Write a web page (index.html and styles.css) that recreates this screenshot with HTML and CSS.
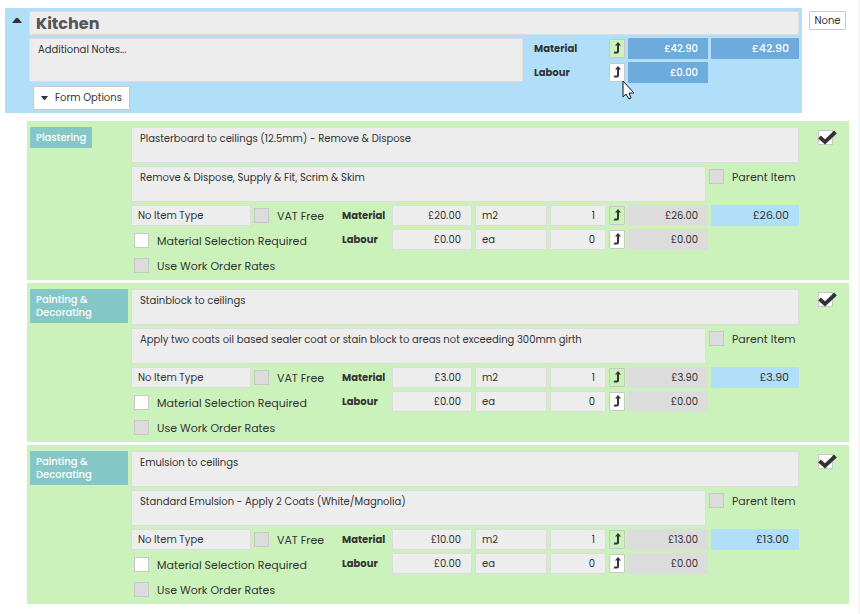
FILE: index.html
```html
<!DOCTYPE html>
<html lang="en">
<head>
    <meta charset="UTF-8">
    <meta name="viewport" content="width=device-width, initial-scale=1.0">
    <title>Kitchen</title>
    <link rel="stylesheet" href="styles.css">
</head>
<body>
    <svg class="sprite" width="0" height="0" aria-hidden="true">
        <symbol id="up" viewBox="0 0 8 12">
            <path d="M5 0L8 3.5H6V9.5Q6 11.5 4 11.5H0.5L1.5 9.5H4V3.5H2Z"/>
        </symbol>
        <symbol id="tick" viewBox="0 0 19 15">
            <path d="M1.5 7L7 12L17.5 2" fill="none" stroke="#333" stroke-width="3.8"/>
        </symbol>
    </svg>

    <div class="top">
        <section class="room">
            <button class="collapse" aria-label="Collapse"><svg width="10" height="5" viewBox="0 0 10 5"><path d="M0 5L4 0H6L10 5Z"/></svg></button>
            <div class="room-body">
                <input class="box room-title" type="text" value="Kitchen" aria-label="Room name">
                <div class="room-row">
                    <textarea class="box notes" aria-label="Additional notes">Additional Notes...</textarea>
                    <div class="totals">
                        <b class="total-label">Material</b>
                        <button class="arrow on" aria-label="Mark up material"><svg width="8" height="12"><use href="#up"/></svg></button>
                        <output class="blue">£42.90</output>
                        <output class="blue large">£42.90</output>
                        <b class="total-label">Labour</b>
                        <div class="pointed">
                            <button class="arrow" aria-label="Mark up labour"><svg width="8" height="12"><use href="#up"/></svg></button>
                            <svg class="cursor" width="13" height="20" viewBox="0 0 13 20"><path d="M1 1V17L4 14L7 19L9 18L7 13H12Z" fill="#fff" stroke="#111"/></svg>
                        </div>
                        <output class="blue">£0.00</output>
                    </div>
                </div>
                <button class="form-options"><svg width="7" height="4" viewBox="0 0 7 4"><path d="M0 0H7L4 4H3Z"/></svg>Form Options</button>
            </div>
        </section>
        <button class="none">None</button>
    </div>

    <main class="items">
        <article class="item">
            <div><span class="tag">Plastering</span></div>
            <div class="form">
                <textarea class="box text" aria-label="Title">Plasterboard to ceilings (12.5mm) - Remove &amp; Dispose</textarea>
                <div class="desc-row">
                    <textarea class="box text" aria-label="Description">Remove &amp; Dispose, Supply &amp; Fit, Scrim &amp; Skim</textarea>
                    <label class="check parent"><input type="checkbox" class="grey">Parent Item</label>
                </div>
                <div class="details">
                    <div class="options">
                        <div class="type-row">
                            <select class="box type" aria-label="Item type"><option>No Item Type</option></select>
                            <label class="check"><input type="checkbox" class="grey">VAT Free</label>
                        </div>
                        <label class="check indent"><input type="checkbox">Material Selection Required</label>
                        <label class="check indent"><input type="checkbox" class="grey">Use Work Order Rates</label>
                    </div>
                    <div class="figures">
                        <b>Material</b>
                        <input class="box num" type="text" value="£20.00" aria-label="Material price">
                        <input class="box" type="text" value="m2" aria-label="Material unit">
                        <input class="box num" type="text" value="1" aria-label="Material quantity">
                        <button class="arrow on" aria-label="Mark up material"><svg width="8" height="12"><use href="#up"/></svg></button>
                        <output class="sum">£26.00</output>
                        <output class="sum large">£26.00</output>
                        <b>Labour</b>
                        <input class="box num" type="text" value="£0.00" aria-label="Labour price">
                        <input class="box" type="text" value="ea" aria-label="Labour unit">
                        <input class="box num" type="text" value="0" aria-label="Labour quantity">
                        <button class="arrow" aria-label="Mark up labour"><svg width="8" height="12"><use href="#up"/></svg></button>
                        <output class="sum">£0.00</output>
                    </div>
                </div>
            </div>
            <label class="done"><input type="checkbox" checked aria-label="Include item"><svg class="tick" width="19" height="15"><use href="#tick"/></svg></label>
        </article>

        <article class="item">
            <div><span class="tag">Painting &amp; Decorating</span></div>
            <div class="form">
                <textarea class="box text" aria-label="Title">Stainblock to ceilings</textarea>
                <div class="desc-row">
                    <textarea class="box text" aria-label="Description">Apply two coats oil based sealer coat or stain block to areas not exceeding 300mm girth</textarea>
                    <label class="check parent"><input type="checkbox" class="grey">Parent Item</label>
                </div>
                <div class="details">
                    <div class="options">
                        <div class="type-row">
                            <select class="box type" aria-label="Item type"><option>No Item Type</option></select>
                            <label class="check"><input type="checkbox" class="grey">VAT Free</label>
                        </div>
                        <label class="check indent"><input type="checkbox">Material Selection Required</label>
                        <label class="check indent"><input type="checkbox" class="grey">Use Work Order Rates</label>
                    </div>
                    <div class="figures">
                        <b>Material</b>
                        <input class="box num" type="text" value="£3.00" aria-label="Material price">
                        <input class="box" type="text" value="m2" aria-label="Material unit">
                        <input class="box num" type="text" value="1" aria-label="Material quantity">
                        <button class="arrow on" aria-label="Mark up material"><svg width="8" height="12"><use href="#up"/></svg></button>
                        <output class="sum">£3.90</output>
                        <output class="sum large">£3.90</output>
                        <b>Labour</b>
                        <input class="box num" type="text" value="£0.00" aria-label="Labour price">
                        <input class="box" type="text" value="ea" aria-label="Labour unit">
                        <input class="box num" type="text" value="0" aria-label="Labour quantity">
                        <button class="arrow" aria-label="Mark up labour"><svg width="8" height="12"><use href="#up"/></svg></button>
                        <output class="sum">£0.00</output>
                    </div>
                </div>
            </div>
            <label class="done"><input type="checkbox" checked aria-label="Include item"><svg class="tick" width="19" height="15"><use href="#tick"/></svg></label>
        </article>

        <article class="item">
            <div><span class="tag">Painting &amp; Decorating</span></div>
            <div class="form">
                <textarea class="box text" aria-label="Title">Emulsion to ceilings</textarea>
                <div class="desc-row">
                    <textarea class="box text" aria-label="Description">Standard Emulsion - Apply 2 Coats (White/Magnolia)</textarea>
                    <label class="check parent"><input type="checkbox" class="grey">Parent Item</label>
                </div>
                <div class="details">
                    <div class="options">
                        <div class="type-row">
                            <select class="box type" aria-label="Item type"><option>No Item Type</option></select>
                            <label class="check"><input type="checkbox" class="grey">VAT Free</label>
                        </div>
                        <label class="check indent"><input type="checkbox">Material Selection Required</label>
                        <label class="check indent"><input type="checkbox" class="grey">Use Work Order Rates</label>
                    </div>
                    <div class="figures">
                        <b>Material</b>
                        <input class="box num" type="text" value="£10.00" aria-label="Material price">
                        <input class="box" type="text" value="m2" aria-label="Material unit">
                        <input class="box num" type="text" value="1" aria-label="Material quantity">
                        <button class="arrow on" aria-label="Mark up material"><svg width="8" height="12"><use href="#up"/></svg></button>
                        <output class="sum">£13.00</output>
                        <output class="sum large">£13.00</output>
                        <b>Labour</b>
                        <input class="box num" type="text" value="£0.00" aria-label="Labour price">
                        <input class="box" type="text" value="ea" aria-label="Labour unit">
                        <input class="box num" type="text" value="0" aria-label="Labour quantity">
                        <button class="arrow" aria-label="Mark up labour"><svg width="8" height="12"><use href="#up"/></svg></button>
                        <output class="sum">£0.00</output>
                    </div>
                </div>
            </div>
            <label class="done"><input type="checkbox" checked aria-label="Include item"><svg class="tick" width="19" height="15"><use href="#tick"/></svg></label>
        </article>
    </main>
</body>
</html>
```
FILE: styles.css
```css
* {
    box-sizing: border-box;
}
html {
    background: #fff;
}
body {
    margin: 0;
    padding: 8px 9px 10px 5px;
    min-height: 100vh;
    border-right: 2px solid #f4f4f4;
    font-family: Poppins, Inter, sans-serif;
    font-size: 10px;
    color: #333;
}
button, input, select, textarea {
    margin: 0;
    font: inherit;
    color: inherit;
}
button {
    padding: 0;
    cursor: pointer;
}
svg {
    display: block;
    fill: #333;
}
.sprite {
    position: absolute;
}
.box {
    display: block;
    width: 100%;
    min-width: 0;
    height: 21px;
    padding: 0 6px;
    border: 1px solid #dcdcdc;
    border-radius: 1px;
    background: #ededed;
}
textarea.box {
    padding: 3px 8px;
    line-height: 16px;
    resize: none;
    overflow: hidden;
}
.num {
    padding: 0 10px;
    text-align: right;
}

/* room header */
.top {
    display: flex;
    align-items: flex-start;
    gap: 7px;
}
.room {
    flex: 1;
    display: flex;
    padding: 3px;
    border-radius: 1px;
    background: #b1def8;
}
.collapse {
    width: 21px;
    height: 16px;
    padding: 2px 0 0 4px;
    border: 0;
    background: none;
}
.room-body {
    flex: 1;
}
.room-title.box {
    height: 24px;
    font-size: 16px;
    font-weight: 700;
    color: #555;
}
.room-row {
    display: flex;
    gap: 11px;
    margin: 3px 0;
}
.notes.box {
    flex: 1;
    height: 44px;
}
.totals {
    display: grid;
    grid-template-columns: 72px 16px 80px 88px;
    grid-auto-rows: 21px;
    gap: 3px;
}
.blue, .sum {
    display: flex;
    align-items: center;
    justify-content: flex-end;
    padding-right: 10px;
    border-radius: 1px;
}
.blue {
    background: #6dabdd;
    color: #fff;
    font-weight: 500;
}
.sum {
    background: #dcdcdc;
}
.large {
    font-size: 11px;
}
.sum.large {
    background: #b1def8;
}
.total-label, .figures b {
    line-height: 21px;
    font-weight: 700;
}
.arrow {
    display: flex;
    align-items: center;
    justify-content: center;
    align-self: center;
    width: 16px;
    height: 19px;
    padding-bottom: 1px;
    border: 1px solid #c8c8c8;
    border-radius: 1px;
    background: #fff;
}
.arrow.on {
    background: #ccf2bc;
}
.pointed {
    position: relative;
    display: flex;
}
.cursor {
    position: absolute;
    left: 13px;
    top: 18px;
    pointer-events: none;
}
.form-options {
    display: flex;
    align-items: center;
    gap: 7px;
    height: 24px;
    margin-left: 4px;
    padding: 0 7px;
    border: 1px solid #c8c8c8;
    border-radius: 1px;
    background: #fff;
}
.none {
    width: 37px;
    height: 19px;
    margin: 3px 3px 0 0;
    border: 1px solid #c8c8c8;
    border-radius: 1px;
    background: #fff;
}

/* work items */
.items {
    display: grid;
    gap: 3px;
    margin: 8px 0 0 22px;
}
.item {
    display: grid;
    grid-template-columns: 98px 1fr 47px;
    gap: 3px;
    padding: 6px 0 4px 3px;
    background: #ccf2bc;
}
.tag {
    display: inline-block;
    padding: 4px 6px;
    border-radius: 1px;
    background: #85c7c7;
    color: #fff;
    font-weight: 500;
    line-height: 13px;
}
.form {
    display: grid;
    gap: 3px;
}
.text.box {
    height: 36px;
}
.desc-row {
    display: flex;
    gap: 3px;
}
.desc-row .text {
    flex: 1;
}
.check {
    display: flex;
    align-items: center;
    gap: 8px;
    height: 21px;
    font-size: 11px;
    line-height: 18px;
    white-space: nowrap;
}
.parent {
    width: 90px;
}
.indent {
    padding-left: 3px;
}
input[type="checkbox"] {
    flex: none;
    appearance: none;
    width: 15px;
    height: 15px;
    border: 1px solid #c8c8c8;
    background: #fff;
}
input.grey {
    background: #dcdcdc;
}
.details {
    display: flex;
    gap: 3px;
}
.options {
    flex: 1;
    display: grid;
    gap: 4px;
}
.type-row {
    display: flex;
    gap: 3px;
}
.type.box {
    appearance: none;
    width: 120px;
}
.figures {
    display: grid;
    grid-template-columns: 47px 80px 72px 56px 16px 80px 88px;
    grid-auto-rows: 21px;
    gap: 3px;
}
.done {
    position: relative;
    align-self: start;
    padding: 3px 0 0 16px;
}
.done input {
    display: block;
}
.tick {
    position: absolute;
    left: 16px;
    top: 3px;
}
```
